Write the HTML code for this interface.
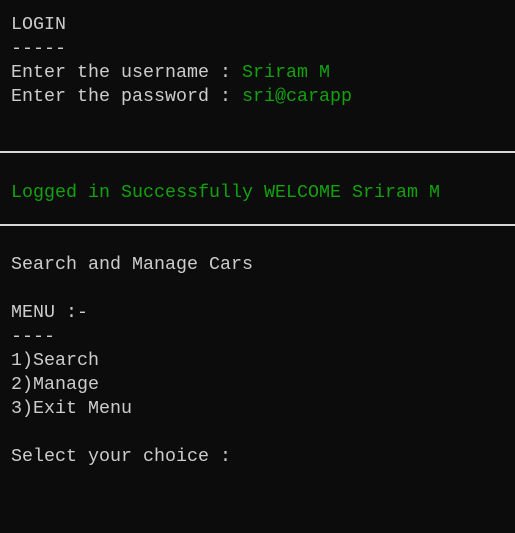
<!DOCTYPE html>
<html><head><meta charset="utf-8"><style>
html,body{margin:0;padding:0;background:#0c0c0c;width:515px;height:533px;overflow:hidden}
.t{position:absolute;left:11px;font-family:"Liberation Mono",monospace;font-size:18.33px;line-height:24px;color:#cccccc;white-space:pre}
.g{color:#13a10e}
.hr{position:absolute;left:0;width:515px;height:2px;background:#d8d8d8}
</style></head><body>
<div class="t" style="top:13px">LOGIN
-----
Enter the username : <span class="g">Sriram M</span>
Enter the password : <span class="g">sri@carapp</span></div>
<div class="hr" style="top:151px"></div>
<div class="t g" style="top:181px">Logged in Successfully WELCOME Sriram M</div>
<div class="hr" style="top:224px"></div>
<div class="t" style="top:253px">Search and Manage Cars

MENU :-
----
1)Search
2)Manage
3)Exit Menu

Select your choice :</div>
</body></html>
